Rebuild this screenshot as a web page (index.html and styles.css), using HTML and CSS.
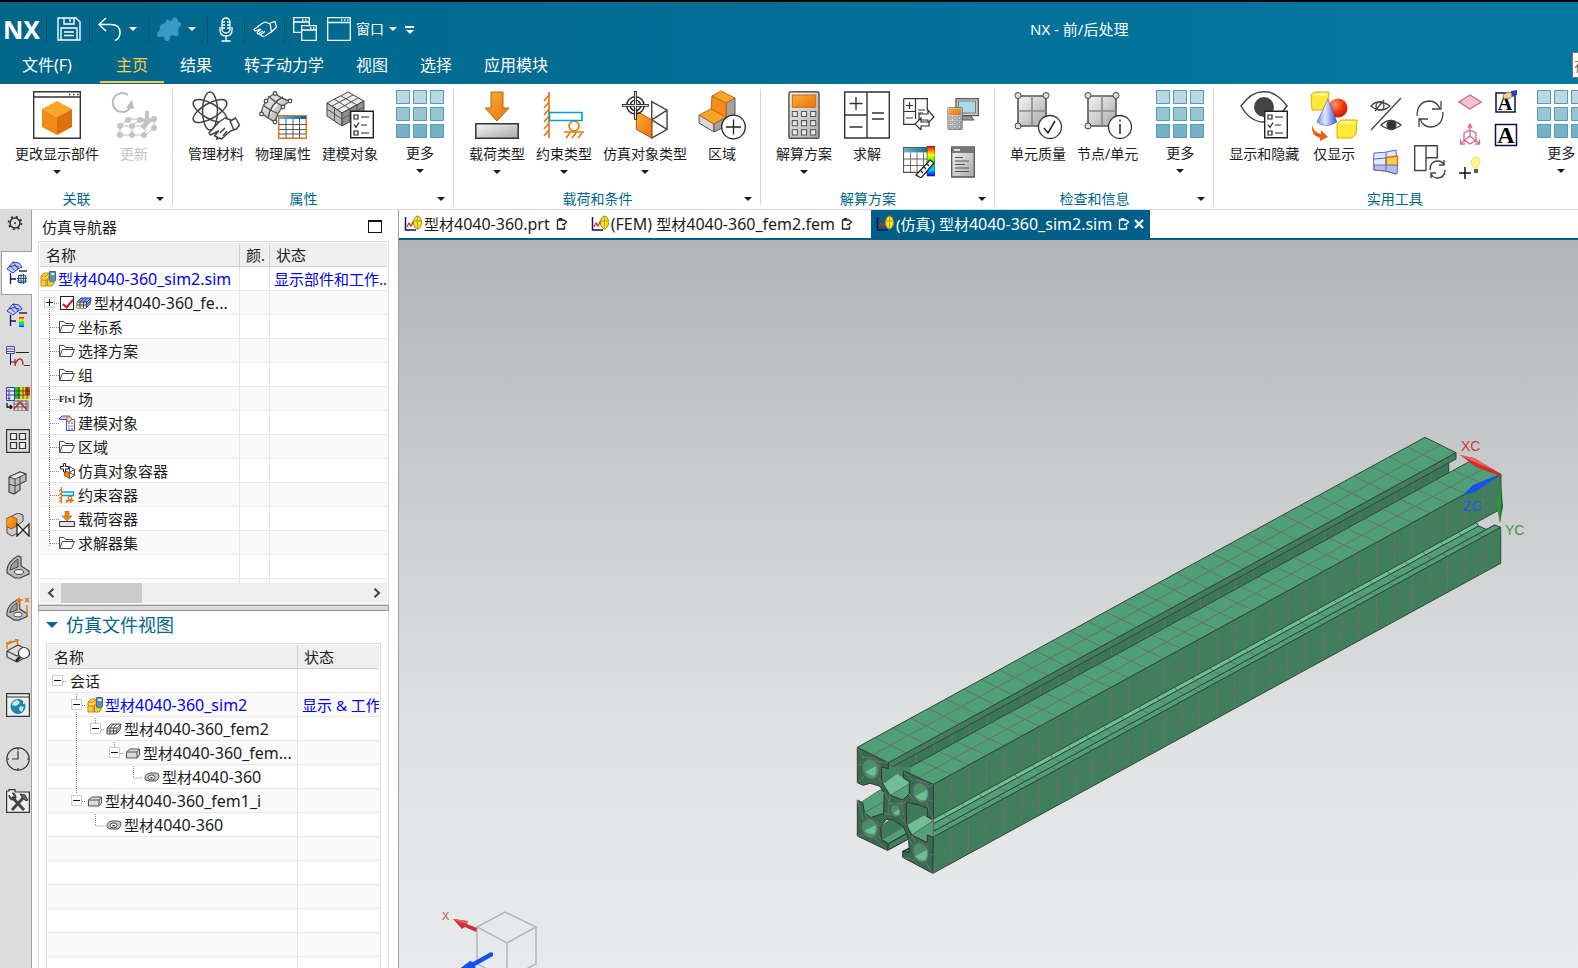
FILE: index.html
```html
<!DOCTYPE html>
<html lang="zh-CN">
<head>
<meta charset="utf-8">
<title>NX - 前/后处理</title>
<link rel="stylesheet" href="styles.css">
</head>
<body>
<svg class="defs" aria-hidden="true">
  <defs>
    <linearGradient id="gOrange" x1="0" y1="0" x2="1" y2="1"><stop offset="0" stop-color="#fbb034"/><stop offset="1" stop-color="#e8720c"/></linearGradient>
    <linearGradient id="gGrey" x1="0" y1="0" x2="1" y2="1"><stop offset="0" stop-color="#f6f6f6"/><stop offset="1" stop-color="#a8a8a8"/></linearGradient>
    <linearGradient id="gRain" x1="0" y1="0" x2="0" y2="1"><stop offset="0" stop-color="#f00"/><stop offset=".3" stop-color="#ff0"/><stop offset=".55" stop-color="#0e2"/><stop offset=".8" stop-color="#0cf"/><stop offset="1" stop-color="#00f"/></linearGradient>
    <linearGradient id="gTeal" x1="0" y1="0" x2="1" y2="0"><stop offset="0" stop-color="#6bb8cf"/><stop offset="1" stop-color="#00688c"/></linearGradient>
    <radialGradient id="gRed" cx=".35" cy=".3" r=".8"><stop offset="0" stop-color="#ff9a70"/><stop offset=".5" stop-color="#f63a10"/><stop offset="1" stop-color="#b01800"/></radialGradient>
    <linearGradient id="gBlue" x1="0" y1="0" x2="1" y2="0"><stop offset="0" stop-color="#6c86ee"/><stop offset=".4" stop-color="#e4eaff"/><stop offset="1" stop-color="#3850d0"/></linearGradient>
  </defs>
  <symbol id="more" viewBox="0 0 48 48">
    <g stroke="#4f9db8"><g fill="#bbd8e3"><path d="M.5.5h13v13H.5zM17.500.5h13v13h-13zM34.500.5h13v13h-13z"/></g><g fill="#98c5d5"><path d="M.5 17.500h13v13H.5zM17.500 17.500h13v13h-13zM34.500 17.500h13v13h-13z"/></g><g fill="#76b1c7"><path d="M.5 34.500h13v13H.5zM17.500 34.500h13v13h-13zM34.500 34.500h13v13h-13z"/></g></g>
  </symbol>
  <symbol id="hand" viewBox="0 0 24 17"><path fill="none" stroke="currentColor" stroke-width="1.200" stroke-linejoin="round" d="M17 3 12.500 1 9 2.500 1 8.500 2 10 8 8M8 8l-4 3.500 1 1.500 5-3M6 12.500l1 1.500 5-3.500M8 14l1.500 1.500 2.500-.5 6-4M17 2l5-1.500 1.500 5.500-5 5z"/></symbol>
  <symbol id="folder" viewBox="0 0 16 16"><path fill="#fff" stroke="#444" d="M.5 13.500v-11h4.500l1.500 2h7v2M.5 13.500l3-7h12l-3 7z"/></symbol>
  <symbol id="list" viewBox="0 0 24 28"><path fill="#fff" stroke="#222" stroke-width="1.400" d="M.7.7h22.600v26.600H.7z"/><path fill="none" stroke="#222" stroke-width="1.200" d="M4 4.500h4v4H4zM11 6.500h8M4 14l2 3 3-5M11 14.500h6M4 20.500h4v4H4zM11 22.500h8"/></symbol>
  <symbol id="nodes" viewBox="0 0 48 48"><path fill="url(#gGrey)" stroke="#555" stroke-width="1.600" d="M4 5h28v30H4z"/><path stroke="#888" d="M18 5v30M4 20h28" stroke-width="1.600"/><g fill="#ddd" stroke="#444"><circle cx="4" cy="4.500" r="3"/><circle cx="32" cy="4.500" r="3"/><circle cx="4" cy="35" r="3"/></g><circle cx="36" cy="36" r="11.500" fill="#fff" stroke="#333" stroke-width="1.300"/></symbol>
  <symbol id="calc" viewBox="0 0 31 47"><rect x=".8" y=".8" width="29.400" height="45.400" rx="2" fill="url(#gGrey)" stroke="#555" stroke-width="1.500"/><path fill="url(#gOrange)" stroke="#c96a10" d="M4 4h23v12H4z"/><path fill="#e8e8e8" stroke="#555" d="M4 20h5v5H4zM13 20h5v5h-5zM22 20h5v5h-5zM4 29h5v5H4zM13 29h5v5h-5zM22 29h5v5h-5zM4 38h5v5H4zM13 38h5v5h-5zM22 38h5v5h-5z"/></symbol>
  <symbol id="table" viewBox="0 0 30 24"><path fill="#fff" stroke="#555" stroke-width="1.200" d="M.6.6h28.800v22.800H.6z"/><path fill="url(#gTeal)" d="M1 1h28v4H1z"/><path fill="none" stroke="#666" d="M1 11h28M1 17h28M8 5v18M15 5v18M22 5v18"/></symbol>
  <symbol id="simobj" viewBox="0 0 48 50"><path fill="#fff" stroke="#444" stroke-width="1.500" d="M31 11 47 20v20L31 49zM31 30 47 20M31 30l16 10M31 11v38"/><path fill="url(#gOrange)" stroke="#a85308" d="M15 21 31 30v19L15 40z"/><g fill="none" stroke="#222" stroke-width="1.500"><circle cx="14" cy="15" r="9"/><circle cx="14" cy="15" r="5.500"/><path stroke-width="3" d="M14 0v30M0 15h28"/><path stroke="#fff" stroke-width="1" d="M14 1v28M1 15h26"/></g></symbol>
  <symbol id="constraint" viewBox="0 0 44 48"><g fill="none" stroke="#e8740c" stroke-width="1.600"><path d="M7 1v46M7 4l-5 6M7 11l-5 6M7 18l-5 6M7 25l-5 6M7 32l-5 6M7 39l-5 6"/><circle cx="32" cy="35" r="5"/><path d="M22 41h20M28 42l-4 5M34 42l-4 5M40 42l-4 5"/></g><path fill="#fff" stroke="#00a0c8" stroke-width="1.600" d="M7.500 21.500H40v8H7.500z"/></symbol>
  <symbol id="load" viewBox="0 0 44 48"><path fill="url(#gOrange)" stroke="#b5651d" d="M16 1h12v16h6L22 30 10 17h6z"/><path fill="url(#gGrey)" stroke="#333" stroke-width="1.500" d="M.8 32.800h42.400v14.400H.8z"/></symbol>
  <symbol id="simfile" viewBox="0 0 16 16"><path fill="#ffd23c" stroke="#c08a10" d="M1 5 4 2h5v11l-2 2H1z"/><path fill="#ffe88a" stroke="#c08a10" d="M1 9h5l3-2M6 9v6M1 5h5l2-2"/><path fill="#f6c93a" stroke="#c08a10" d="M7.500 8.500 10 7h4v5.500L12 15H7.500z"/><path fill="#5f93ad" stroke="#41707f" d="M9.500.5h6v9l-2 1.500-4-1z"/><path fill="#d6f0fa" d="M11 2h3.500v2H11z"/></symbol>
  <symbol id="femgrey" viewBox="0 0 16 16"><path fill="#d4d4d4" stroke="#555" d="M1 7 5 3h10l-1 6-4 4H1zM1 7h10l4-4M11 7l-1 6M4 7v6M7.500 7v6M1 10h9.500l4-4M4 7l3.500-4M7.500 7 11 3"/></symbol>
  <symbol id="femblue" viewBox="0 0 16 16"><path fill="#9aa6f2" stroke="#2f3aa8" d="M1 7 5 3h10l-1 6-4 4H1z"/><path fill="#f3ec4c" d="M1 7h9v6H1z"/><path fill="none" stroke="#2f3aa8" d="M1 7h10l4-4M10.500 7v6M4 7v6M7.500 7v6M1 10h9.500l4-4M4 7l3.500-4M7.500 7 11 3"/></symbol>
  <symbol id="ideal" viewBox="0 0 16 16"><path fill="#d9d9d9" stroke="#555" d="M1.500 7 4.500 4h10v6l-2.500 3H1.500zM1.500 7H12v6M12 7l2.500-3"/></symbol>
  <symbol id="part" viewBox="0 0 16 16"><path fill="#c9c9c9" stroke="#555" d="M1 9q0-4 5-5h6q3 0 3 3t-3 5H5q-4 0-4-3z"/><ellipse cx="7.500" cy="8.500" rx="3.500" ry="2.500" fill="#eee" stroke="#555"/><path fill="#333" d="M6.500 8h2v1.500h-2z"/></symbol>
  <symbol id="doc" viewBox="0 0 18 18"><path fill="none" stroke="#12106a" stroke-width="1.500" d="M1.500 2v13H12"/><path fill="none" stroke="#e02020" stroke-width="1.200" d="m3 12 2-4 2 3 2-4 2 3"/><ellipse cx="13.500" cy="7.500" rx="4" ry="6.500" fill="#f5e22a" stroke="#9a8a10"/><path stroke="#b8a414" d="M10 6h7M13.500 1v13"/></symbol>
  <symbol id="pin" viewBox="0 0 12 12"><path fill="none" stroke="currentColor" stroke-width="1.300" d="M8 2H1.500v9h7V8M3.500 2V.700h2V2M6 6.500h2L10.500 4 8 2"/></symbol>
  <symbol id="bracket" viewBox="0 0 24 24"><path fill="#bdbdbd" stroke="#444" stroke-width="1.200" d="M1 15Q2 6 12 1l3 1v9l8 5v3l-9 4H9l-8-5z"/><path fill="#9c9c9c" stroke="#444" d="M4 15q1-7 8-11v8z"/><ellipse cx="13" cy="17" rx="4.500" ry="2.500" fill="#eee" stroke="#444"/></symbol>
  <symbol id="navmesh" viewBox="0 0 24 24"><path fill="#bfd0f8" stroke="#2b3ab8" d="M1 8 7 1l6 1 3 4-4 2-5 4zM4 4.500l5 5M7 1l5 7M3 6q5-3 10 0"/><path stroke="#111" stroke-width="1.300" d="M13 10h8"/><path fill="none" stroke="#12106a" stroke-width="1.300" d="M4.500 12v11M5 18h5"/></symbol>
</svg>

<header class="titlebar">
  <div class="quick">
    <span class="logo">NX</span>
    <span class="qsep"></span>
    <button class="qbtn qbtn-wide" aria-label="保存"><svg width="24" height="24" viewBox="0 0 24 24" fill="none" stroke="#fff" stroke-width="1.400"><path d="M1 1h18l4 4v18H1zM7 1v6h10V1M13 2v3M4 23V11h16v12M7 15h10M7 18.500h10"/></svg></button>
    <span class="qsep"></span>
    <button class="qbtn" aria-label="撤消"><svg width="24" height="24" viewBox="0 0 24 24" fill="none" stroke="#fff" stroke-width="1.500"><path d="M8 1 1 7.500 8 14M1 7.500h12q9 0 9 8 0 6-5 8"/></svg></button>
    <button class="qdrop" aria-label="撤消列表"><i class="caret"></i></button>
    <span class="qsep"></span>
    <button class="qbtn" aria-label="命令"><svg width="24" height="24" viewBox="0 0 24 24"><path fill="#3a9ac4" d="M9 4q1-3 3-1 1 2 3 0 1-4 4-2 3 1 2 4 4 0 3 3-1 2-3 3 1 2 0 4 2 3-1 4-2 1-4-1-2 0-3 2 0 4-3 4t-3-4q-2-1-4 0-4 0-3-3 0-2 2-3 1-2 1-4 0-3 3-3 2 0 3-3z"/></svg></button>
    <button class="qdrop" aria-label="命令列表"><i class="caret"></i></button>
    <span class="qsep"></span>
    <button class="qbtn qbtn-mic" aria-label="语音"><svg width="14" height="25" viewBox="0 0 14 25" fill="none" stroke="#fff" stroke-width="1.300"><rect x="3" y="1" width="8" height="15" rx="4"/><path d="M3 5h3M8 5h3M3 8h3M8 8h3M3 11h3M8 11h3M1 10v3q0 6 6 6t6-6v-3M7 19v5M2.500 24h9"/></svg></button>
    <span class="qsep"></span>
    <button class="qbtn qbtn-hand" aria-label="触控"><svg width="24" height="17"><use href="#hand"/></svg></button>
    <span class="qsep"></span>
    <button class="qbtn" aria-label="层叠窗口"><svg width="24" height="24" viewBox="0 0 24 24" fill="none" stroke="#fff" stroke-width="1.300"><path d="M8 15.300H.7V.7h15.600V8M.7 5h15.600M9 3h1.500M12 3h1.500M8.700 8.700h14.600v14.600H8.700zM8.700 13h14.600M17 11h1.500M20 11h1.500"/></svg></button>
    <button class="qbtn qbtn-text"><svg width="24" height="24" viewBox="0 0 24 24" fill="none" stroke="#fff" stroke-width="1.300"><path d="M.7.7h22.600v22.600H.7zM.7 5.500h22.600M14 3h1.500M17 3h1.500M20 3h1.500"/></svg><span>窗口</span><i class="caret"></i></button>
    <button class="qmore" aria-label="自定义"><i class="caret caret-bar"></i></button>
  </div>
  <div class="apptitle">NX - 前/后处理</div>
</header>
<nav class="tabs">
  <button class="tab tab-file">文件(F)</button>
  <button class="tab tab-on">主页</button>
  <button class="tab">结果</button>
  <button class="tab">转子动力学</button>
  <button class="tab">视图</button>
  <button class="tab">选择</button>
  <button class="tab">应用模块</button>
  <input class="search" type="search" placeholder="在此处查找命令" aria-label="查找命令">
</nav>

<section class="ribbon">
  <div class="group">
    <div class="items">
      <button class="big"><svg width="48" height="48" viewBox="0 0 48 48"><path fill="#fff" stroke="#333" stroke-width="1.400" d="M.7.7h46.600v46.600H.7zM.7 6h46.600"/><path stroke="#333" stroke-width="1.300" d="M36 3.500h1.500M40 3.500h1.500M44 3.500h1.500"/><path fill="#f8a62b" d="m24 10 15 8-15 8-15-8z"/><path fill="#f28a1a" d="m9 18 15 8v18L9 36z"/><path fill="#e0700c" d="m39 18-15 8v18l15-8z"/></svg><span>更改显示部件</span><i class="caret"></i></button>
      <button class="big" disabled><svg width="48" height="48" viewBox="0 0 48 48" fill="none" stroke="#b9b9b9"><path stroke-width="2" d="M20 17A9.500 9.500 0 1 1 18 4"/><path fill="#b9b9b9" stroke="none" d="m16 17 6-8 2 9z"/><path stroke-width="1" d="M10 35h25v9H10zM10 35l8-7h26l-8 7M22 35v9M22 35l8-7M36 44l8-8v-8"/><path fill="#c4c4c4" stroke="none" d="M35 20h4v8h5l-7 6-7-6h5z"/><g fill="#c4c4c4" stroke="none"><circle cx="10" cy="35" r="3"/><circle cx="22" cy="35" r="3"/><circle cx="34" cy="35" r="3"/><circle cx="10" cy="44" r="3"/><circle cx="22" cy="44" r="3"/><circle cx="34" cy="44" r="3"/><circle cx="18" cy="29" r="3"/><circle cx="30" cy="29" r="3"/><circle cx="44" cy="37" r="3"/><circle cx="44" cy="28" r="3"/></g></svg><span>更新</span></button>
    </div>
    <div class="gfoot"><span>关联</span><button class="launch" aria-label="关联选项"><i class="caret"></i></button></div>
  </div>
  <div class="group">
    <div class="items items-more">
      <button class="big"><svg width="48" height="48" viewBox="0 0 48 48" fill="none" stroke="#444" stroke-width="1.500"><g><ellipse cx="18" cy="20" rx="7.500" ry="19"/><ellipse cx="18" cy="20" rx="7.500" ry="19" transform="rotate(60 18 20)"/><ellipse cx="18" cy="20" rx="7.500" ry="19" transform="rotate(-60 18 20)"/></g><path fill="#fff" stroke-linejoin="round" d="m39 29-6-2-6 4-10 11 1.500 2 8-4-4 5 3 1-1 2 3-1 2 1 9-8 6-2 3-4-4-7-5 3z"/><path d="m38 30 4 9M28 42l5-5M31 45l4-5"/></svg><span>管理材料</span></button>
      <button class="big"><svg width="48" height="48" viewBox="0 0 48 48"><path fill="url(#gGrey)" stroke="#555" stroke-width="1.400" d="M2 22Q5 8 16 2q6 6 15 8Q20 16 16 31 10 28 2 22zM9 5q7 6 14 10M4 14q8 6 14 8M24 6Q12 12 9 27"/><g fill="#fff" stroke="#444" stroke-width="1.200"><circle cx="16" cy="2.500" r="1.800"/><circle cx="31" cy="10" r="1.800"/><circle cx="2.500" cy="23" r="1.800"/><circle cx="16" cy="31" r="1.800"/><circle cx="7" cy="10" r="1.800"/><circle cx="24" cy="16" r="1.800"/></g><path fill="#fff" stroke="#e07a18" stroke-width="1.500" d="M19.700 24.700h27.600v22.600H19.700z"/><path fill="url(#gTeal)" d="M20 25h27v3H20z"/><path stroke="#555" d="M20 33.500h27M20 38.500h27M20 43h27M27 28v19M34 28v19M40.500 28v19"/></svg><span>物理属性</span></button>
      <button class="big"><svg width="48" height="48" viewBox="0 0 48 48"><path fill="#ececec" stroke="#444" d="m1 12 21-11 16 9-22 12z"/><path fill="#bdbdbd" stroke="#444" d="m1 12 15 10v13L1 25z"/><path fill="#8f8f8f" stroke="#444" d="m38 10-22 12v13l22-12z"/><path fill="none" stroke="#555" d="m6 15 21-11M11 19 32 7M8 8l16 10M15 5l16 9M1 18l15 10 22-12M8.500 17v13M24 18v13M31 14v13"/><svg x="24" y="19" width="24" height="29"><use href="#list"/></svg></svg><span>建模对象</span></button>
      <button class="big big-more"><svg width="48" height="48"><use href="#more"/></svg><span>更多</span><i class="caret"></i></button>
    </div>
    <div class="gfoot"><span>属性</span><button class="launch" aria-label="属性选项"><i class="caret"></i></button></div>
  </div>
  <div class="group">
    <div class="items">
      <button class="big"><svg width="48" height="48"><use href="#load"/></svg><span>载荷类型</span><i class="caret"></i></button>
      <button class="big"><svg width="48" height="48"><use href="#constraint"/></svg><span>约束类型</span><i class="caret"></i></button>
      <button class="big"><svg width="48" height="50"><use href="#simobj"/></svg><span>仿真对象类型</span><i class="caret"></i></button>
      <button class="big"><svg width="48" height="48" viewBox="0 0 48 48"><path fill="#d8d8d8" stroke="#555" d="m1 24 15 9v8L1 32z"/><path fill="#a4a4a4" stroke="#555" d="m16 33 12-6V12l9-5v16l-9 12-12 6z"/><path fill="#f28c1c" stroke="#c4650f" d="m13 18 15 8V11L14 5z"/><path fill="#f9a52c" stroke="#c4650f" d="m1 24 12-6 15 8-12 7zM14 5l9-5 14 7-9 5z"/><circle cx="35.500" cy="36" r="11.800" fill="#fff" stroke="#222" stroke-width="1.300"/><path stroke="#222" stroke-width="1.300" d="M28 36h15M35.500 28.500v15"/></svg><span>区域</span></button>
    </div>
    <div class="gfoot"><span>载荷和条件</span><button class="launch" aria-label="载荷和条件选项"><i class="caret"></i></button></div>
  </div>
  <div class="group">
    <div class="items">
      <button class="big"><svg width="48" height="48"><use href="#calc"/></svg><span>解算方案</span><i class="caret"></i></button>
      <button class="big"><svg width="48" height="48" viewBox="0 0 48 48" fill="none" stroke="#333" stroke-width="1.400"><path d="M1.700 1h44.600v46H1.700zM24 1v46M1.700 24H24M13 6v13M6.500 12.500h13M6.500 36h13M29 22h12M29 28h12"/></svg><span>求解</span></button>
      <div class="smalls smalls-2x2">
        <button aria-label="求解导入导出"><svg width="32" height="32" viewBox="0 0 32 32" fill="none" stroke="#333" stroke-width="1.200"><path d="M.7.7h23.600v12M.7.700v25.600H12M12.500 1v20M1 13.500h12M6.500 4v7M3 7.500h7M3 20h7M15 12h7M15 15h5"/><path fill="#fff" d="M16 16h9v-4l6 7-6 6v-3h-9z"/><path fill="#fff" d="M26 24h-8v-4l-6 6 6 6v-4h8z"/></svg></button>
        <button aria-label="求解监视器"><svg width="32" height="32" viewBox="0 0 32 32"><path fill="#ccc" stroke="#555" stroke-width="1.300" d="M9 .7h22.300v17H9z"/><path fill="#a8dbe5" stroke="#777" d="M11.500 3h17v12h-17z"/><path fill="#999" stroke="#555" d="M17 18h7l3 4H14z"/><svg x="0" y="9" width="16" height="23"><use href="#calc"/></svg></svg></button>
        <button aria-label="结果测量"><svg width="32" height="32" viewBox="0 0 32 32"><svg y="1" width="28" height="26" viewBox="0 0 30 24" preserveAspectRatio="none"><use href="#table"/></svg><path fill="url(#gRain)" stroke="#333" stroke-width=".6" d="M24 0h8v30h-8z"/><path fill="#fff" stroke="#222" stroke-width="1.200" d="m13 29 14-15 4 3-13 15zM18 25l2 2M21 21l2 2M24 18l2 2"/></svg></button>
        <button aria-label="求解报告"><svg width="24" height="32" viewBox="0 0 24 32"><path fill="url(#gGrey)" stroke="#555" stroke-width="1.300" d="M.7 1h22.600v30H.7z"/><path fill="#777" d="M1 1h22v6H1z"/><path fill="#ddd" d="M3 3h6v2H3z"/><path stroke="#555" stroke-width="1.200" d="M4 11.500h8M4 15h14M4 18.500h10M4 22h14M4 25.500h14"/></svg></button>
      </div>
    </div>
    <div class="gfoot"><span>解算方案</span><button class="launch" aria-label="解算方案选项"><i class="caret"></i></button></div>
  </div>
  <div class="group">
    <div class="items items-more">
      <button class="big"><svg width="48" height="48" viewBox="0 0 48 48"><use href="#nodes"/><path fill="none" stroke="#222" stroke-width="1.500" d="m30 37 4 5 7-12"/></svg><span>单元质量</span></button>
      <button class="big"><svg width="48" height="48" viewBox="0 0 48 48"><use href="#nodes"/><path stroke="#222" stroke-width="1.500" d="M36 33v10M36 28.500v2"/></svg><span>节点/单元</span></button>
      <button class="big big-more"><svg width="48" height="48"><use href="#more"/></svg><span>更多</span><i class="caret"></i></button>
    </div>
    <div class="gfoot"><span>检查和信息</span><button class="launch" aria-label="检查和信息选项"><i class="caret"></i></button></div>
  </div>
  <div class="group group-last">
    <div class="items items-more">
      <button class="big"><svg width="48" height="48" viewBox="0 0 48 48"><path fill="#fff" stroke="#444" stroke-width="1.500" d="M1 15Q12 0 24 .8 36 0 47 15 36 31 24 31 10 31 1 15z"/><circle cx="24" cy="16" r="10" fill="#444"/><svg x="24" y="19" width="24" height="29"><use href="#list"/></svg></svg><span>显示和隐藏</span></button>
      <button class="big"><svg width="48" height="48" viewBox="0 0 48 48"><path fill="#ffe93a" stroke="#e2a800" d="m1 4 4-3h14l-2 15-4 3H2z"/><path fill="#fff68a" d="m2 4 4-2h12l-3 3z"/><circle cx="28" cy="17" r="9.500" fill="url(#gRed)"/><path fill="url(#gBlue)" stroke="#4055c8" stroke-width=".6" d="M18 8 7 31q9 7 20 0z"/><path fill="#ffe93a" stroke="#e2a800" d="m27 33 4-4h16l-1 14-4 4H27z"/><path fill="#fff68a" d="m28 33 4-3h14l-4 3z"/><path fill="#e8610c" d="M2 34q2 8 9 9v-4l7 7-8 4v-3Q1 45 2 34z"/></svg><span>仅显示</span></button>
      <div class="smalls smalls-2x2">
        <button aria-label="反转显示和隐藏"><svg width="32" height="34" viewBox="0 0 32 34" fill="none" stroke="#444" stroke-width="1.300"><path d="M1 9q7-8 19 0-9 8-19 0zM31 1 1 33M11 28q9-9 20 0-10 8-20 0z"/><circle cx="10" cy="9" r="4"/><path d="m5 14 9-11"/><circle cx="21.500" cy="28" r="4.500" fill="#333"/></svg></button>
        <button aria-label="更新显示"><svg width="30" height="30" viewBox="0 0 30 30" fill="none" stroke="#444" stroke-width="1.300"><path d="M2 17Q2 3 14 2q8 0 11 8M17 10h9V2M28 13q0 14-12 15-8 0-11-8M13 20H4v8"/></svg></button>
        <button aria-label="单元显示"><svg width="26" height="26" viewBox="0 0 26 26"><path fill="#e4e9fb" stroke="#5a68c8" d="M1 4q12 0 22-3 2 12 0 24-11-4-22-4-1-9 0-17z"/><path fill="#fbd23a" stroke="#e66a10" stroke-width="1.300" d="M13 8.500 24.500 7v10H13z"/><path fill="#b8bede" stroke="#5a68c8" d="M1 16h23.500l-.5 9q-11-4-23-4z"/><path fill="none" stroke="#5a68c8" d="M1 10l12-1M13 3v20"/></svg></button>
        <button aria-label="布局刷新"><svg width="32" height="34" viewBox="0 0 32 34" fill="none" stroke="#444" stroke-width="1.400"><path d="M12 25.500H.7V.7h22.600v12H12v13M12 .7v12"/><path d="M16 25q0-9 8-9 4 0 6 4M25 20h5v-5M31 25q0 8-8 8-4 0-6-4M22 28h-5v5"/></svg></button>
      </div>
      <div class="smalls smalls-2x3">
        <button aria-label="基准平面"><svg width="24" height="16" viewBox="0 0 24 16"><path fill="#f6bfd4" stroke="#d4688f" stroke-width="1.300" d="m12 1 11 7-11 7L1 8z"/></svg></button>
        <button aria-label="编辑文本"><svg width="24" height="24" viewBox="0 0 24 24"><path fill="#fff" stroke="#12104a" stroke-width="1.500" d="M2 3h19v19H2z"/><text x="11" y="20" class="glyph-a">A</text><path fill="#f5cf8e" stroke="#8a6a3a" stroke-width=".7" d="m9 5 5-3 5 1-2 5-7 1z"/><path fill="#2c3fc0" d="m17 1 6-1v5l-5 2z"/></svg></button>
        <button aria-label="基准坐标系"><svg width="24" height="24" viewBox="0 0 24 24" fill="none" stroke="#d4688f" stroke-width="1.300"><path d="M12 1v12M10 5l2-4 2 4M6 10l6-3 6 3v7l-6 4-6-4zM12 13l10 8M12 13 2 21M2.500 16.500V21H7M21.500 16.500V21H17"/></svg></button>
        <button aria-label="注释"><svg width="24" height="24" viewBox="0 0 24 24"><path fill="#fff" stroke="#12104a" stroke-width="1.500" d="M1.500 1.500h21v21h-21z"/><text x="12" y="20" class="glyph-a glyph-big">A</text></svg></button>
        <button aria-label="创建灯光"><svg width="24" height="24" viewBox="0 0 24 24"><path stroke="#111" stroke-width="1.500" d="M7 11v12M1 17h12"/><path fill="#fff58a" stroke="#eee26a" d="M13 6q1-5 5-5t4 5q0 3-3 5v2h-3v-2q-3-2-3-5z"/><path fill="#556" d="M16 13h4v4h-4z"/></svg></button>
      </div>
      <button class="big big-more"><svg width="48" height="48"><use href="#more"/></svg><span>更多</span><i class="caret"></i></button>
    </div>
    <div class="gfoot"><span>实用工具</span><span class="launch"></span></div>
  </div>
</section>

<main class="work">
  <aside class="rail">
    <button class="rail-gear" aria-label="设置"><svg width="16" height="16" viewBox="0 0 16 16" fill="none" stroke="#333"><circle cx="8" cy="8" r="5" stroke-width="1.500"/><circle cx="8" cy="8" r="6.300" stroke-width="2" stroke-dasharray="2 2.950"/><path d="M7 8h2" stroke-width="1.500"/></svg></button>
    <button class="rail-on" aria-label="仿真导航器"><svg width="24" height="24" viewBox="0 0 24 24"><use href="#navmesh"/><path fill="#fff" stroke="#2d4f90" d="M12.500 14.500h7v7h-7zM11 17.500h10M11 20h10M15 13v10M17.500 13v10"/></svg></button>
    <button aria-label="后处理导航器"><svg width="24" height="24" viewBox="0 0 24 24"><use href="#navmesh"/><path fill="url(#gRain)" d="M13 14h5v10h-5z"/></svg></button>
    <button aria-label="XY函数导航器"><svg width="24" height="24" viewBox="0 0 24 24" fill="none"><path fill="#e8ecff" stroke="#4a4f90" d="M.5 1.500h8v7h-8zM1 4h8M1 6.500h8"/><path stroke="#222" d="M10 7.500h13"/><path stroke="#12106a" d="M4.500 9v11M5 17h4"/><path stroke="#c02020" stroke-width="1.300" d="M9 21V14M9 20q2-6 5-6t3 6"/><path stroke="#444" d="M18 20.500h6"/></svg></button>
    <button aria-label="分析列表"><svg width="24" height="24" viewBox="0 0 24 24"><path fill="#e0e6ff" stroke="#3440a0" d="M.5.5h8v13h-8zM2 3h2v2H2zM2 7h2v2H2zM2 11h2v1H2zM5 4h3M5 8h3"/><path fill="#f0d800" d="M9 0h15v12H9z"/><path fill="#2fc030" d="M9 0h5v12H9z"/><path fill="#e04010" d="M19 0h5v8h-5z"/><path stroke="#333" stroke-width=".8" d="M9 4h15M9 8h15M13 0v12M17 0v12M21 0v12"/><path fill="none" stroke="#555" stroke-width=".8" d="M8 14h14v10H8zM8 17h14M8 20h14M12 13v11M16 13v11M20 13v11"/><path fill="none" stroke="#d02020" stroke-width="1.300" d="m8 22 6-7 7 8"/><path fill="none" stroke="#111" stroke-width="1.300" d="M1 16v4h5M4 18l2 2-2 2"/></svg></button>
    <button aria-label="装配导航器"><svg width="24" height="24" viewBox="0 0 24 24" fill="#ececec" stroke="#333" stroke-width="1.200"><path fill="none" d="M.6.6h22.800v22.800H.6z"/><path d="M4.500 4.500h6v6h-6zM13.500 4.500h6v6h-6zM4.500 13.500h6v6h-6zM13.500 13.500h6v6h-6z"/></svg></button>
    <button aria-label="部件导航器"><svg width="24" height="24" viewBox="0 0 24 24"><path fill="#bcbcbc" stroke="#444" stroke-width="1.200" d="M3 6 14 1l6 2v7l-6 3v6l-6 4-5-2z"/><path fill="#e8e8e8" stroke="#444" d="M3 6l6 2 11-5-6-2z"/><path fill="none" stroke="#444" d="M9 8v14M3 13l6 2 5-2M14 13V6"/></svg></button>
    <button aria-label="约束导航器"><svg width="24" height="24" viewBox="0 0 24 24"><path fill="#ccc" stroke="#444" d="m6 3 6-3 5 2v6l-5 4v8l-6 3-5-3V10z"/><path fill="url(#gOrange)" stroke="#a85308" d="m0 6 5-3 6 3v7l-6 3-5-3z"/><path fill="#fff" stroke="#222" stroke-width="1.300" d="M11 10v13l12-12v12L11 11"/></svg></button>
    <button aria-label="重用库"><svg width="24" height="24"><use href="#bracket"/></svg></button>
    <button aria-label="测量"><svg width="24" height="24" viewBox="0 0 24 24"><svg y="2" width="22" height="22"><use href="#bracket"/></svg><path fill="none" stroke="#e8740c" stroke-width="1.400" d="M11 3h6M14 1l-3 2 3 3M21 8v10M19 1l4 4M23 1l-4 4"/></svg></button>
    <button aria-label="检查"><svg width="24" height="24" viewBox="0 0 24 24"><path fill="#ddd" stroke="#444" stroke-width="1.200" d="m1 12 11-6 10 5v6l-11 6L1 18zM1 12l10 5 11-6"/><path fill="none" stroke="#e8740c" stroke-width="1.400" d="M1 10V3M1 5l11-4M9 0l3 1-1 4M1 5l4-3"/><circle cx="18" cy="14" r="5.500" fill="#fff" stroke="#333" stroke-width="1.200"/><path stroke="#222" stroke-width="2.500" d="m14 18-4 4"/></svg></button>
    <button class="rail-gap" aria-label="网页浏览器"><svg width="24" height="24" viewBox="0 0 24 24"><path fill="#eee" stroke="#333" stroke-width="1.200" d="M.6.6h22.800v22.800H.6zM.6 4h22.800"/><circle cx="12" cy="13.500" r="7.500" fill="#1c86a8"/><path fill="#c9ecf5" d="m7 9 4-2 3 2-2 3-3 1-3-1zM14 13l4 1-2 5-3-2zM17 8l2 3-2 0z"/></svg></button>
    <button class="rail-gap" aria-label="历史记录"><svg width="24" height="24" viewBox="0 0 24 24" fill="none" stroke="#333" stroke-width="1.200"><circle cx="12" cy="12" r="11.200"/><path d="M12 4v8H6M12 1v2M12 21v2M1 12h2M21 12h2"/></svg></button>
    <button aria-label="角色"><svg width="24" height="24" viewBox="0 0 24 24"><path fill="#eee" stroke="#333" stroke-width="1.200" d="M.6 23.400V2H3V.6h6V3h14.400v20.400z"/><path fill="none" stroke="#444" stroke-width="3" d="m6 8 12 13M18 8 6 21"/><path fill="#666" stroke="#333" d="m3 6 2 3h3V6L6 4q4 0 4 5l-3 2q-4 0-4-5zM14 5l5 1 3 5-2 1-4-4z"/></svg></button>
  </aside>

  <section class="panel">
    <div class="panel-head"><span>仿真导航器</span><button class="maxi" aria-label="最大化"></button></div>
    <div class="frame">
      <div class="tree">
        <table class="grid">
          <colgroup><col class="c-name"><col class="c-color"><col></colgroup>
          <thead><tr><th>名称</th><th>颜.</th><th>状态</th></tr></thead>
          <tbody>
            <tr class="current"><td><div class="node"><svg width="16" height="16"><use href="#simfile"/></svg><span>型材<b>4040-360_sim2.sim</b></span></div></td><td></td><td class="status">显示部件和工作..</td></tr>
            <tr><td><div class="node lv-part"><button class="exp exp-plus" aria-label="展开"></button><input type="checkbox" class="tick" checked aria-label="型材4040-360_fem2"><svg width="16" height="16"><use href="#femblue"/></svg><span>型材<b>4040-360_fe...</b></span></div></td><td></td><td></td></tr>
            <tr><td><div class="node lv-item"><svg width="16" height="16"><use href="#folder"/></svg><span>坐标系</span></div></td><td></td><td></td></tr>
            <tr><td><div class="node lv-item"><svg width="16" height="16"><use href="#folder"/></svg><span>选择方案</span></div></td><td></td><td></td></tr>
            <tr><td><div class="node lv-item"><svg width="16" height="16"><use href="#folder"/></svg><span>组</span></div></td><td></td><td></td></tr>
            <tr><td><div class="node lv-item"><i class="fx">F[x]</i><span>场</span></div></td><td></td><td></td></tr>
            <tr><td><div class="node lv-item"><svg width="16" height="16" viewBox="0 0 16 16"><path fill="#c4ccf5" stroke="#4450c0" d="M.5 3.500 3 1h8l-2 3.500H.5z"/><path fill="#fff" stroke="#4450c0" d="M7.500 4.500h8v11h-8zM9 8h2M12 8h2M9 11h2M12 11h2M9 14h2M12 14h2"/><circle cx="10" cy="4" r="2.500" fill="#f0cfa0" stroke="#a07a40"/></svg><span>建模对象</span></div></td><td></td><td></td></tr>
            <tr><td><div class="node lv-item"><svg width="16" height="16"><use href="#folder"/></svg><span>区域</span></div></td><td></td><td></td></tr>
            <tr><td><div class="node lv-item"><svg width="16" height="16" viewBox="0 0 16 16"><path fill="#fff" stroke="#444" d="m10.500 3.500 5 3v6l-5 3zM10.500 9.500l5-3M10.500 9.500l5 3"/><path fill="#ee8418" stroke="#a85308" d="m5.500 7 5 3v5.500l-5-3z"/><path fill="#fff" stroke="#222" d="M4.500.5h2v3h3v2.500h-3v3h-2v-3h-3V3.500h3z"/></svg><span>仿真对象容器</span></div></td><td></td><td></td></tr>
            <tr><td><div class="node lv-item"><svg width="16" height="16" viewBox="0 0 16 16" fill="none"><path stroke="#e8740c" stroke-width="1.300" d="M2.500 0v16M2.500 2 0 4M2.500 6 0 8M2.500 10 0 12M2.500 13 0 15M7 13.500h8M9 14l-2 2M13 14l-2 2"/><circle cx="11" cy="11" r="1.800" stroke="#e8740c" stroke-width="1.300"/><path stroke="#00a0c8" stroke-width="1.300" d="M3 5h11.500v3.500H3"/></svg><span>约束容器</span></div></td><td></td><td></td></tr>
            <tr><td><div class="node lv-item"><svg width="16" height="16" viewBox="0 0 16 16"><path fill="#ee8418" stroke="#b5651d" stroke-width=".6" d="M6 0h4v5h3L8 10 3 5h3z"/><path fill="#e4e4e4" stroke="#333" d="M.5 10.500h15v5H.5z"/></svg><span>载荷容器</span></div></td><td></td><td></td></tr>
            <tr><td><div class="node lv-item"><svg width="16" height="16"><use href="#folder"/></svg><span>求解器集</span></div></td><td></td><td></td></tr>
            <tr><td></td><td></td><td></td></tr>
            <tr><td></td><td></td><td></td></tr>
          </tbody>
        </table>
        <svg class="links" width="60" height="316" aria-hidden="true"><path d="M9.500 66v238M14 60.500h5M10 84.500h9M10 108.500h9M10 132.500h9M10 156.500h9M10 180.500h9M10 204.500h9M10 228.500h9M10 252.500h9M10 276.500h9M10 300.500h9"/></svg>
      </div>
      <div class="hscroll">
        <button aria-label="向左"><svg width="8" height="10" viewBox="0 0 8 10"><path d="M6.500.8 2 5l4.500 4.200"/></svg></button>
        <div class="thumb"></div>
        <button aria-label="向右"><svg width="8" height="10" viewBox="0 0 8 10"><path d="M1.500.8 6 5 1.500 9.200"/></svg></button>
      </div>
    </div>
    <div class="splitter"></div>
    <div class="files">
      <button class="files-head"><i class="caret"></i>仿真文件视图</button>
      <div class="frame frame-files">
        <div class="tree">
          <table class="grid">
            <colgroup><col class="c-file"><col></colgroup>
            <thead><tr><th>名称</th><th>状态</th></tr></thead>
            <tbody>
              <tr><td><div class="node d0"><button class="exp" aria-label="折叠"></button><span>会话</span></div></td><td></td></tr>
              <tr class="current"><td><div class="node d1"><button class="exp" aria-label="折叠"></button><svg width="16" height="16"><use href="#simfile"/></svg><span>型材<b>4040-360_sim2</b></span></div></td><td class="status">显示 &amp; 工作</td></tr>
              <tr><td><div class="node d2"><button class="exp" aria-label="折叠"></button><svg width="16" height="16"><use href="#femgrey"/></svg><span>型材<b>4040-360_fem2</b></span></div></td><td></td></tr>
              <tr><td><div class="node d3"><button class="exp" aria-label="折叠"></button><svg width="16" height="16"><use href="#ideal"/></svg><span>型材<b>4040-360_fem...</b></span></div></td><td></td></tr>
              <tr><td><div class="node d4"><svg width="16" height="16"><use href="#part"/></svg><span>型材<b>4040-360</b></span></div></td><td></td></tr>
              <tr><td><div class="node d1"><button class="exp" aria-label="折叠"></button><svg width="16" height="16"><use href="#ideal"/></svg><span>型材<b>4040-360_fem1_i</b></span></div></td><td></td></tr>
              <tr><td><div class="node d5"><svg width="16" height="16"><use href="#part"/></svg><span>型材<b>4040-360</b></span></div></td><td></td></tr>
              <tr><td></td><td></td></tr><tr><td></td><td></td></tr><tr><td></td><td></td></tr>
              <tr><td></td><td></td></tr><tr><td></td><td></td></tr><tr><td></td><td></td></tr>
            </tbody>
          </table>
          <svg class="links" width="120" height="200" aria-hidden="true"><path d="M15 36.500h4M28.500 49v5M34 60.500h4M28.500 67v82M47.500 73v5M53 84.500h4M66.500 97v5M72 108.500h4M85.500 121v12h9M34 156.500h4M47.500 169v12h9"/></svg>
        </div>
      </div>
    </div>
  </section>

  <section class="stage">
    <div class="doctabs">
      <button class="doctab"><svg width="18" height="18"><use href="#doc"/></svg><span>型材<b>4040-360.prt</b></span><svg class="pin" width="12" height="12"><use href="#pin"/></svg></button>
      <button class="doctab"><svg width="18" height="18"><use href="#doc"/></svg><span><b>(FEM) </b>型材<b>4040-360_fem2.fem</b></span><svg class="pin" width="12" height="12"><use href="#pin"/></svg></button>
      <button class="doctab doctab-on"><svg width="18" height="18"><use href="#doc"/></svg><span>(仿真) 型材<b>4040-360_sim2.sim</b></span><svg class="pin" width="12" height="12"><use href="#pin"/></svg><svg class="close" width="10" height="10" viewBox="0 0 10 10"><path stroke="#fff" stroke-width="2.200" d="m1 1 8 8M9 1 1 9"/></svg></button>
    </div>
    <svg class="view" viewBox="399 240 1179 728" preserveAspectRatio="xMinYMin slice" role="img" aria-label="型材网格模型">
      <g id="beam"></g>
      <g id="cap" transform="translate(840 720) scale(.33333)" stroke="#666" stroke-width="3" stroke-linejoin="round">
        <path fill="#3f8560" stroke="none" d="m122 140 90 0v80l-88-30z"/>
        <path fill="#6ec093" d="m127 192 45-32 36 24v8l-58 38z"/>
        <path fill="#52a279" d="m150 227 58-36v35l-20 16z"/>
        <path fill="#3d7c5a" d="M198 244h66v60l-64 20z"/>
        <path fill="#6ec093" d="m200 315 52-30 28 18-64 44z"/>
        <path fill="#52a279" d="m214 346 66-44v48h-18v24z"/>
        <path fill="#52a279" d="m68 244 52-34 13 6v32l-60 29z"/>
        <path fill="#52a279" d="m73 277 58-30v34l-40 12z"/>
        <path fill="#3d7c5a" d="m122 318 30-20 50 22v30l-60 20-20-12z"/>
        <path fill="#52a279" d="m124 360 66-38 16 35-60 14z"/>
        <path fill="#3f7f5c" stroke="#222" d="m145 371 61-34v20l-63 34z"/>
        <path fill="#3f7f5c" stroke="#222" d="m188 394 20-10v14z"/>
        <path fill="#356b4e" stroke="#333" stroke-width="3" d="M52 82 145 128V146L124 140 126 188 150 225 188 240 208 222V185L190 174V152L280 193V298L262 290V265L238 256 200 246V315L215 345 262 368V345L280 352 278 460 188 412V394L208 398 206 357 192 322 160 300 140 298 122 318 124 358 145 371 142 391 52 348V240L68 248 73 277 92 293 131 280 133 216 118 198 90 190 70 196 52 188Z"/>
        <g fill="none" stroke="#777" stroke-width="2.500">
          <path d="m52 82 18 34M145 128l-30-3M52 188l20-18M126 188l-10-18M124 140l-12-6M66 110l40 6 16 30M52 135h16M280 193l-22 12M190 152l30 32M280 298l-20-48M208 222l18 26M280 245l-16-6M225 180l34 8 8 40"/>
          <path d="m133 216 20 40M188 240l-8 16M131 280l26 6M200 315l-22-30M150 225l-6 60M200 246l-24 8M145 250l40 0 6 36"/>
          <path d="m52 240 18 60M52 348l22-2M124 358l-12-16M122 318l-10-4M73 277l10 18M92 293l24 18M100 350l42 41M188 412l36 8M278 460l-20-32M215 345l12 24M262 368l-2 20M206 357l16 24M280 405l-16-4M222 372l34 6"/>
        </g>
        <g fill="#479069" stroke="#5f5f5f" stroke-width="4">
          <ellipse cx="92" cy="147" rx="25" ry="31" transform="rotate(-18 92 147)"/><ellipse cx="242" cy="218" rx="24" ry="31" transform="rotate(-18 242 218)"/><ellipse cx="167" cy="272" rx="15" ry="20" transform="rotate(-18 167 272)"/><ellipse cx="90" cy="325" rx="24" ry="30" transform="rotate(-18 90 325)"/><ellipse cx="242" cy="398" rx="23" ry="31" transform="rotate(-18 242 398)"/>
        </g>
        <g fill="#6ec093" stroke="#4f8a6a" stroke-width="2">
          <path d="m75 155 33-18q6 18-4 32-16 0-29-14zM224 228l38-20q6 18-6 34-20 2-32-14zM158 278l20-12q4 12-2 20-12 2-18-8zM72 332l36-18q4 18-5 30-18 2-31-12zM224 408l38-20q4 18-6 34-20 2-32-14z"/>
        </g>
      </g>
      <g class="axes">
        <path fill="#d02c2c" d="m1460 455 14 3 27 16-1 2-24-9z"/><path fill="#f06060" d="m1460 455 14 3 20 12-20-8z"/>
        <path fill="#1550f0" d="m1463 495 10-10 25-10-1 2-22 15z"/>
        <path fill="#1e6a26" d="m1500 474 3 32-3 17-3-17z"/><path fill="#3b9142" d="m1500 474 1 30-1 19-3-17z"/>
        <text x="1461" y="451" fill="#c8383a">XC</text><text x="1463" y="511" fill="#2456e6">ZC</text><text x="1505" y="535" fill="#3f9a44">YC</text>
        <path fill="none" stroke="#b4b6b8" stroke-width="1.500" d="m477 927 28-15 31 15-29 16zM477 927v37l30 15M507 943v30M536 927v37l-29 15"/>
        <path fill="#c93434" d="m453 919 15 2-1 3 10 4-1 4-11-5-3 2z"/><path fill="#e86060" d="m453 919 15 2-1 3-5-1z"/>
        <path fill="#1550e8" d="m458 970 12-9 3 1 18-10 2 1v3l-18 10 1 3-6 3z"/>
        <text x="442" y="920" class="axis-x" fill="#d04848">X</text>
      </g>
    </svg>
  </section>
</main>
<script src="beam.js"></script>
</body>
</html>
```
FILE: beam.js
```js
// Extrudes the profile edges along the beam and draws the element mesh on each face.
const NS = 'http://www.w3.org/2000/svg';
const beam = document.getElementById('beam');
const L = [567.7, -310];
const CELLS = 32;

const faces = [
  { p: [881, 766], q: [881, 800], fill: '#3b7756', rows: 1 },
  { p: [888.3, 762.7], q: [888.3, 769], fill: '#3f7f5c', rows: 1 },
  { p: [857.3, 747.3], q: [888.3, 762.7], fill: '#50a077', rows: 2 },
  { p: [902, 824], q: [911, 836], fill: '#6ec093', rows: 1 },
  { p: [911, 836], q: [920, 840], fill: '#50a077', rows: 1 },
  { p: [920, 840], q: [927, 835], fill: '#478f6a', rows: 1 },
  { p: [927, 835], q: [933, 837.3], fill: '#50a077', rows: 1 },
  { p: [933, 837.3], q: [933, 873.3], fill: '#3f7f5c', rows: 2 },
  { p: [933.3, 784.3], q: [933.3, 819], fill: '#3f7f5c', rows: 2 },
  { p: [903.3, 770.7], q: [933.3, 784.3], fill: '#50a077', rows: 2 }
];

function add(d, attrs) {
  const el = document.createElementNS(NS, 'path');
  el.setAttribute('d', d);
  for (const k in attrs) el.setAttribute(k, attrs[k]);
  beam.appendChild(el);
}

for (const f of faces) {
  const at = (u, v) => [
    f.p[0] + (f.q[0] - f.p[0]) * v + L[0] * u,
    f.p[1] + (f.q[1] - f.p[1]) * v + L[1] * u
  ].map(n => n.toFixed(1)).join(' ');
  add(`M${at(0, 0)}L${at(1, 0)}L${at(1, 1)}L${at(0, 1)}Z`, { fill: f.fill });
  let d = '';
  for (let i = 1; i < CELLS; i++) d += `M${at(i / CELLS, 0)}L${at(i / CELLS, 1)}`;
  for (let j = 1; j < f.rows; j++) d += `M${at(0, j / f.rows)}L${at(1, j / f.rows)}`;
  add(d, { stroke: '#6c6f6d', fill: 'none' });
  add(`M${at(0, 0)}L${at(1, 0)}L${at(1, 1)}L${at(0, 1)}`, { stroke: '#33463c', fill: 'none' });
}
```
FILE: styles.css
```css
* { box-sizing: border-box; }
html, body { height: 100%; }
body {
  margin: 0;
  display: flex;
  flex-direction: column;
  overflow: hidden;
  border-top: 2px solid #000;
  background: #fff;
  color: #1c1c1c;
  font: 14px/20px "Noto Sans", "Noto Sans CJK SC", sans-serif;
}
button, input { font: inherit; color: inherit; }
button { margin: 0; padding: 0; border: 0; background: none; }
svg { display: block; flex: none; }
.defs { position: absolute; width: 0; height: 0; }

.caret {
  display: block;
  width: 0;
  height: 0;
  border: 4px solid transparent;
  border-top-color: currentColor;
  border-bottom: 0;
}
.caret-bar { position: relative; }
.caret-bar::before {
  content: "";
  position: absolute;
  left: -5px;
  top: -8px;
  width: 9px;
  height: 2px;
  background: currentColor;
}

/* Title bar */
.titlebar {
  display: flex;
  align-items: center;
  flex: none;
  height: 50px;
  padding-top: 4px;
  color: #fff;
  background: linear-gradient(90deg, #00668a, #0578a2);
}
.quick { display: flex; align-items: center; height: 28px; width: 420px; }
.logo { width: 42px; padding-left: 3px; font: bold 25px/28px "Noto Sans", sans-serif; }
.qsep { width: 1px; height: 28px; margin: 0 8px 0 4px; background: #004f70; }
.qbtn { display: flex; align-items: center; justify-content: center; min-width: 24px; height: 28px; }
.qbtn-wide { margin: 0 4px 0 2px; }
.qbtn-mic { margin: 0 2px 0 -2px; }
.qbtn-hand { margin-right: 3px; }
.qdrop { display: flex; align-items: center; justify-content: center; width: 22px; height: 28px; }
.qbtn-text { gap: 5px; margin-left: 10px; }
.qmore { display: flex; margin-left: 9px; padding-top: 6px; }
.apptitle { margin-left: 610px; font-size: 15px; white-space: nowrap; }

.tabs {
  display: flex;
  flex: none;
  height: 32px;
  overflow: hidden;
  color: #fff;
  font-size: 16px;
  background: linear-gradient(90deg, #00668a, #0578a2);
}
.tab { flex: none; height: 31px; padding: 0 16px 4px; border-bottom: 2px solid transparent; }
.tab-file { padding: 0 28px 4px 22px; }
.tab-on { color: #ffc94a; border-color: #ffc94a; }
.search {
  flex: none;
  width: 200px;
  height: 26px;
  margin: 0 -194px 0 auto;
  padding: 0 1px;
  border: 1px solid #777;
  background: #fff;
  font-size: 15px;
}

/* Ribbon */
.ribbon {
  display: flex;
  flex: none;
  height: 126px;
  overflow: hidden;
  border-bottom: 1px solid #d9d9d9;
  background: #fff;
}
.group {
  position: relative;
  display: flex;
  flex: none;
  flex-direction: column;
  justify-content: space-between;
  padding: 6px 0 0;
}
.group:not(.group-last)::after {
  content: "";
  position: absolute;
  right: 0;
  top: 5px;
  bottom: 4px;
  width: 1px;
  background: #d6d6d6;
}
.items { display: flex; align-items: flex-start; gap: 1px; padding: 0 10px; }
.items-more { padding-right: 5px; }
.big {
  display: flex;
  flex-direction: column;
  align-items: center;
  min-width: 58px;
  padding: 1px 5px 0;
  white-space: nowrap;
}
.big > svg { height: 48px; overflow: visible; }
.big > span { margin-top: 5px; }
.big > .caret { margin-top: 6px; }
.big:disabled { color: #c4c4c4; }
.big-more { margin-left: 7px; }
.big-more > svg { margin-top: -1px; }
.gfoot { display: flex; align-items: center; height: 21px; color: #00688c; }
.gfoot > span:first-child { flex: 1; text-align: center; }
.launch { display: flex; flex: none; align-items: center; width: 20px; height: 20px; padding-left: 3px; color: #1c1c1c; }
.smalls { display: grid; }
.smalls button { display: grid; place-items: center; }
.smalls-2x2 { grid-template: repeat(2, 48px) / repeat(2, 44px); }
.smalls-2x3 { grid-template: repeat(3, 33px) / repeat(2, 36px); margin-left: -1px; margin-top: -5px; }
.glyph-a { font: bold 20px "Liberation Serif", serif; text-anchor: middle; }
.glyph-big { font-size: 24px; }

/* Work area */
.work { display: flex; flex: 1; min-height: 0; }
.rail {
  display: flex;
  flex: none;
  flex-direction: column;
  width: 32px;
  border-right: 1px solid #a0a0a0;
  background: #dcdcdc;
}
.rail button { display: grid; flex: none; place-items: center; height: 42px; padding-left: 4px; }
.rail .rail-gear { height: 26px; margin-bottom: 16px; padding: 0 2px 0 0; }
.rail .rail-on {
  margin: 0 -1px 0 2px;
  padding-left: 2px;
  background: #fff;
  outline: 1px solid #a0a0a0;
  clip-path: inset(-1px 0 -1px -1px);
}
.rail .rail-gap { margin-top: 12px; }

.panel {
  display: flex;
  flex: none;
  flex-direction: column;
  width: 367px;
  padding: 0 9px 0 6px;
  border-right: 1px solid #a0a0a0;
  background: #fff;
  font-size: 15px;
}
.panel-head { display: flex; align-items: center; justify-content: space-between; flex: none; height: 31px; padding: 2px 7px 0 4px; }
.maxi { width: 14px; height: 13px; border: 1px solid #111; border-top-width: 2px; }
.frame { flex: none; padding: 1px; border: 1px solid #d9d9d9; background: #fff; }
.tree { position: relative; height: 340px; overflow: hidden; }
.grid { width: 100%; table-layout: fixed; border-collapse: separate; border-spacing: 0; }
.c-name { width: 200px; }
.c-color { width: 30px; }
.c-file { width: 250px; }
.grid th, .grid td {
  height: 24px;
  padding: 0;
  overflow: hidden;
  border-right: 1px solid #e6e6e6;
  border-bottom: 1px solid #e9e9e9;
  line-height: 22px;
  text-align: left;
  white-space: nowrap;
}
.grid th { padding-left: 6px; border-color: #d0d0d0; background: #efefef; font-weight: normal; }
.grid th:last-child, .grid td:last-child { border-right: 0; }
.grid tbody tr:nth-child(even) { background: #fafafa; }
.grid .status { padding-left: 4px; }
.current { color: #0000f0; }
.node { display: flex; align-items: center; height: 23px; }
.node span { margin-left: 2px; }
.lv-item span { margin-left: 3px; }
.node b, .doctab b { font-size: 16px; font-weight: normal; }
.node .exp + span { margin-left: 7px; }
.lv-part { padding-left: 4px; }
.lv-item { padding-left: 19px; }
.exp {
  flex: none;
  width: 11px;
  height: 11px;
  border: 1px solid #cfcfcf;
  background: linear-gradient(#111, #111) center / 7px 1px no-repeat #fff;
}
.exp-plus { background: linear-gradient(#111, #111) center / 7px 1px no-repeat, linear-gradient(#111, #111) center / 1px 7px no-repeat #fff; }
.exp + svg { margin-left: 5px; }
.tick {
  position: relative;
  appearance: none;
  flex: none;
  width: 14px;
  height: 14px;
  margin: 0 2px 0 5px;
  border: 1px solid #222;
  background: #fff;
}
.tick:checked::after {
  content: "";
  position: absolute;
  left: 4px;
  top: 0;
  width: 4px;
  height: 9px;
  border: solid #e01020;
  border-width: 0 2px 2px 0;
  transform: rotate(40deg);
}
.fx { width: 16px; font: bold 9px/16px "Liberation Serif", serif; color: #12104a; }
.links { position: absolute; left: 0; top: 0; fill: none; stroke: #888; stroke-dasharray: 1 1; pointer-events: none; }

.hscroll { display: flex; align-items: center; height: 20px; background: #efefef; }
.hscroll button { display: grid; place-items: center; width: 21px; height: 20px; }
.hscroll svg { fill: none; stroke: #444; stroke-width: 2; }
.thumb { width: 81px; height: 20px; margin-right: auto; background: #cbcbcb; }
.splitter { flex: none; height: 6px; border: 1px solid #999; background: #d9d9d9; }
.files {
  display: flex;
  flex: 1;
  flex-direction: column;
  min-height: 0;
  padding: 0 7px;
  border: solid #d9d9d9;
  border-width: 0 1px;
}
.files-head { display: flex; align-items: center; gap: 8px; flex: none; height: 32px; padding-bottom: 4px; font-size: 18px; color: #00688c; }
.files-head .caret { border-width: 6px 6px 0; }
.frame-files { flex: 1; min-height: 0; border-bottom: 0; padding-bottom: 0; }
.frame-files .tree { height: 100%; }
.d0 { padding-left: 4px; }
.d1 { padding-left: 23px; }
.d2 { padding-left: 42px; }
.d3 { padding-left: 61px; }
.d4 { padding-left: 96px; }
.d5 { padding-left: 58px; }

/* Document area */
.stage { display: flex; flex: 1; flex-direction: column; min-width: 0; }
.doctabs { display: flex; flex: none; height: 30px; border-bottom: 2px solid #005f87; background: #fff; }
.doctab { display: flex; align-items: center; padding: 0 18px 0 5px; font-size: 15px; white-space: pre; }
.doctab span { margin-left: 2px; }
.doctab .pin { margin-left: 6px; }
.doctab-on { padding-right: 6px; color: #fff; background: #005f87; }
.doctab .close { margin-left: 4px; }
.view {
  flex: 1;
  width: 100%;
  min-height: 0;
  background: linear-gradient(#b3b4b5, #c5c6c8 25%, #dfe0e2 66%, #e6e8ea 90%, #e7e9ec);
}
.axes text { font: 14px "Liberation Sans", sans-serif; }
.axes .axis-x { font-size: 11px; }
```
